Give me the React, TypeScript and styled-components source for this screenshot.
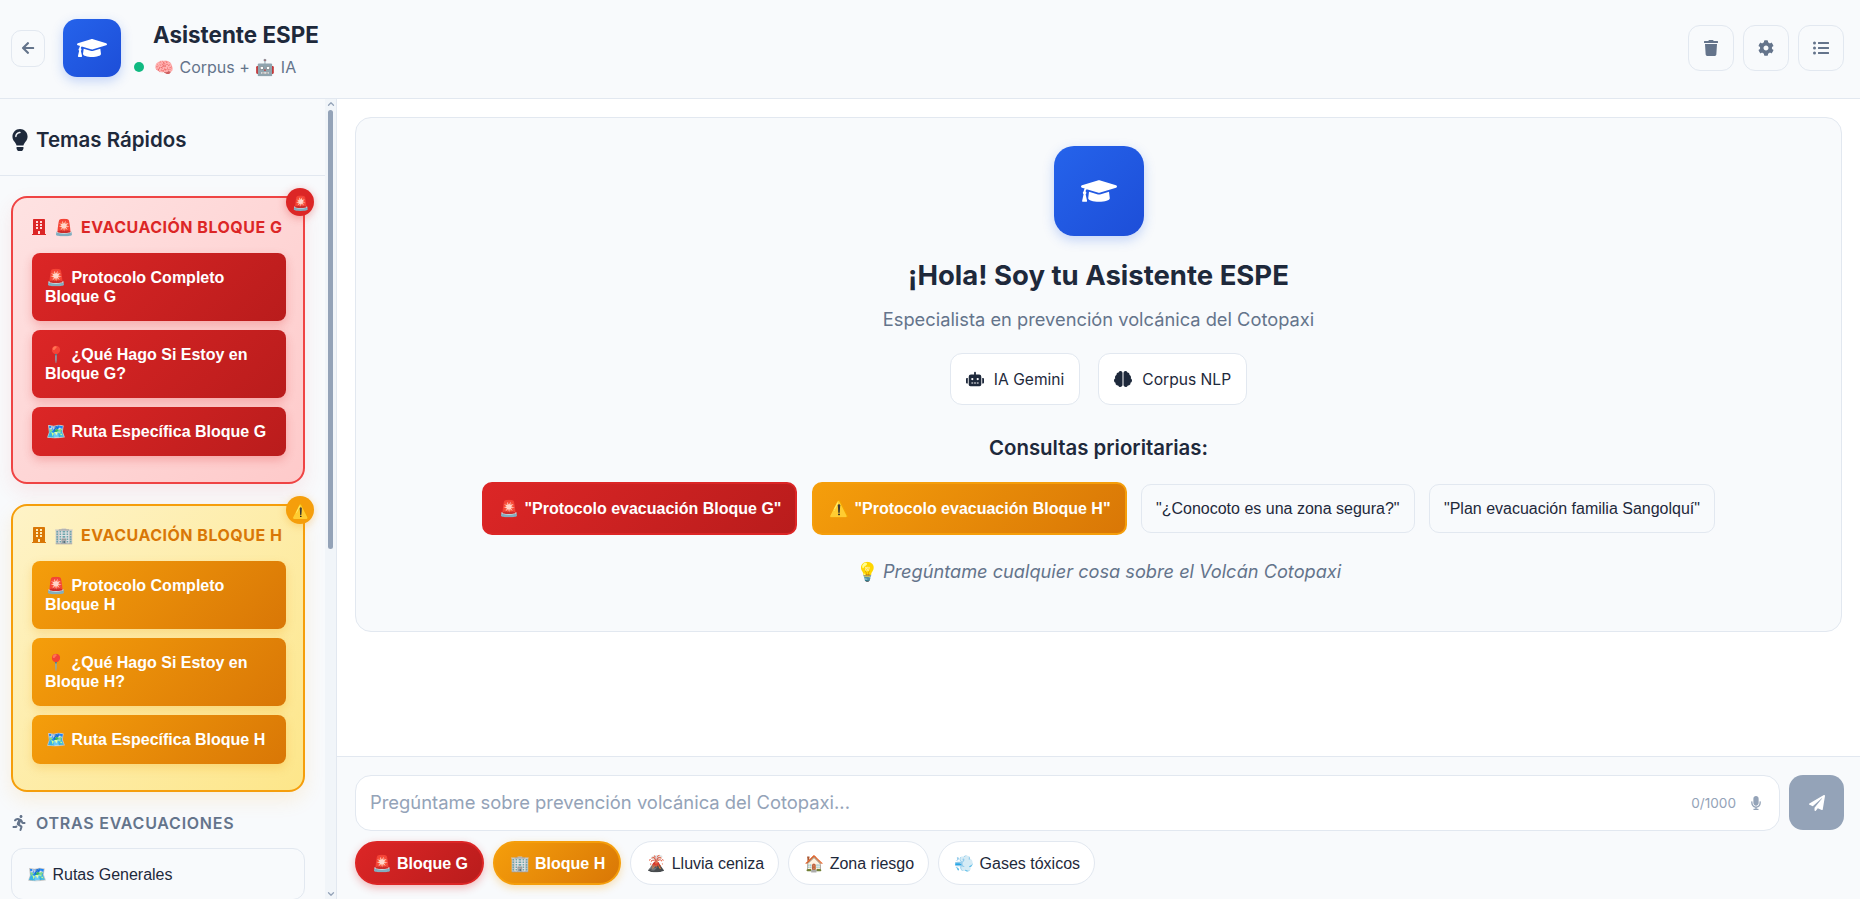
import React from "react";
import styled, { createGlobalStyle, css } from "styled-components";
import { ChevronDown, ChevronUp } from "lucide-react";
import {
  FaArrowLeft,
  FaBrain,
  FaBuilding,
  FaCog,
  FaGraduationCap,
  FaLightbulb,
  FaListUl,
  FaMicrophone,
  FaPaperPlane,
  FaRobot,
  FaRunning,
  FaTrash,
} from "react-icons/fa";

type Tone = "red" | "amber";

const GlobalStyle = createGlobalStyle`
  html, body { margin: 0; height: 100%; overflow: hidden; }
  body { font-family: Inter, "Noto Sans", sans-serif; color: #1e293b; background: #fff; }
  * { box-sizing: border-box; }
  button { font-family: "Liberation Sans", Arial, sans-serif; cursor: pointer; }
`;

const toneGradient = (tone: Tone) =>
  tone === "red"
    ? "linear-gradient(135deg, #dc2626, #b91c1c)"
    : "linear-gradient(135deg, #f59e0b, #d97706)";

const Glyph = styled.span`
  display: inline-block;
  width: 22px;
  text-align: center;
  font-weight: 400;
  font-style: normal;
`;

const Page = styled.div`
  height: 899px;
  display: flex;
  flex-direction: column;
`;

const Header = styled.header`
  height: 99px;
  flex: none;
  display: flex;
  align-items: center;
  justify-content: space-between;
  padding: 0 16px 2px 11px;
  background: #f8fafc;
  border-bottom: 1px solid #e2e8f0;
`;

const HeaderLeft = styled.div`
  display: flex;
  align-items: center;
`;

const BackButton = styled.button`
  width: 34px;
  height: 37px;
  border: 1px solid #e2e8f0;
  border-radius: 10px;
  background: transparent;
  color: #64748b;
  font-size: 14px;
  display: flex;
  align-items: center;
  justify-content: center;
  padding: 0;
`;

const LogoTile = styled.div<{ $size: number; $radius: number; $icon: number }>`
  width: ${(p) => p.$size}px;
  height: ${(p) => p.$size}px;
  border-radius: ${(p) => p.$radius}px;
  background: linear-gradient(135deg, #2563eb, #1d4ed8);
  box-shadow: 0 4px 12px rgba(37, 99, 235, 0.25);
  color: #fff;
  font-size: ${(p) => p.$icon}px;
  display: flex;
  align-items: center;
  justify-content: center;
  flex: none;
`;

const HeaderLogo = styled(LogoTile)`
  margin-left: 18px;
`;

const TitleBlock = styled.div`
  margin-left: 13px;
  display: flex;
  flex-direction: column;
  gap: 8px;
`;

const AppTitle = styled.h1`
  margin: 0 0 0 19px;
  font-size: 22.4px;
  line-height: 29px;
  font-weight: 700;
  color: #1e293b;
`;

const Status = styled.div`
  display: flex;
  align-items: center;
  font-size: 16px;
  line-height: 20px;
  color: #64748b;
  white-space: pre;
`;

const StatusDot = styled.span`
  width: 10px;
  height: 10px;
  border-radius: 50%;
  background: #10b981;
  margin-right: 9px;
`;

const HeaderActions = styled.div`
  display: flex;
  gap: 9px;
`;

const IconButton = styled.button`
  width: 46px;
  height: 46px;
  border: 1px solid #e2e8f0;
  border-radius: 12px;
  background: transparent;
  color: #64748b;
  font-size: 16px;
  display: flex;
  align-items: center;
  justify-content: center;
  padding: 0;
`;

const Body = styled.div`
  flex: 1;
  min-height: 0;
  display: flex;
`;

const Sidebar = styled.aside`
  width: 337px;
  flex: none;
  display: flex;
  background: #f8fafc;
`;

const SidebarScroll = styled.div`
  flex: 1;
  min-width: 0;
  overflow: hidden;
`;

const Rail = styled.div`
  width: 12px;
  flex: none;
  display: flex;
  flex-direction: column;
  align-items: center;
  background: #f1f5f9;
  border-right: 1px solid #e2e8f0;
  color: #94a3b8;
`;

const RailThumb = styled.div`
  width: 5px;
  height: 439px;
  margin-top: 1px;
  border-radius: 3px;
  background: #94a3b8;
`;

const RailSpacer = styled.div`
  flex: 1;
`;

const SidebarHead = styled.div`
  height: 77px;
  display: flex;
  align-items: center;
  gap: 5px;
  padding: 5px 9px 0;
  border-bottom: 1px solid #e2e8f0;
  font-size: 20.5px;
  font-weight: 600;
  color: #1e293b;
  svg { font-size: 22px; }
`;

const SidebarBody = styled.div`
  padding: 20px 20px 0 11px;
`;

const Block = styled.section<{ $tone: Tone }>`
  position: relative;
  height: 288px;
  margin-bottom: 20px;
  padding: 19px 18px 0;
  border-radius: 16px;
  ${(p) =>
    p.$tone === "red"
      ? css`
          border: 2px solid #ef4444;
          background: linear-gradient(135deg, #fee2e2, #fecaca);
          box-shadow: 0 8px 20px rgba(239, 68, 68, 0.1);
        `
      : css`
          border: 2px solid #f59e0b;
          background: linear-gradient(135deg, #fef3c7, #fde68a);
          box-shadow: 0 8px 20px rgba(245, 158, 11, 0.12);
        `}
`;

const BlockBadge = styled.span<{ $tone: Tone }>`
  position: absolute;
  top: -10px;
  right: -11px;
  width: 28px;
  height: 28px;
  border-radius: 50%;
  background: ${(p) => (p.$tone === "red" ? "#dc2626" : "#f59e0b")};
  box-shadow: 0 2px 8px ${(p) => (p.$tone === "red" ? "rgba(220,38,38,.35)" : "rgba(245,158,11,.35)")};
  font-size: 14px;
  display: flex;
  align-items: center;
  justify-content: center;
`;

const BlockTitle = styled.h3<{ $tone: Tone }>`
  margin: 0 0 16px;
  height: 20px;
  display: flex;
  align-items: center;
  gap: 6px;
  font-size: 16px;
  font-weight: 700;
  letter-spacing: 0.5px;
  white-space: nowrap;
  color: ${(p) => (p.$tone === "red" ? "#dc2626" : "#d97706")};
`;

const BlockButtons = styled.div`
  display: flex;
  flex-direction: column;
  gap: 9px;
  margin: 0 -1px 0 1px;
`;

const BlockButton = styled.button<{ $tone: Tone }>`
  border: 0;
  border-radius: 8px;
  padding: 15px 13px;
  text-align: left;
  font-size: 16px;
  line-height: 19px;
  font-weight: 700;
  color: #fff;
  background: ${(p) => toneGradient(p.$tone)};
  box-shadow: 0 4px 10px ${(p) => (p.$tone === "red" ? "rgba(220,38,38,.25)" : "rgba(245,158,11,.25)")};
`;

const SectionLabel = styled.h4`
  margin: 21px 0 15px;
  display: flex;
  align-items: center;
  gap: 9px;
  font-size: 16px;
  line-height: 20px;
  font-weight: 600;
  letter-spacing: 0.75px;
  color: #64748b;
`;

const TopicButton = styled.button`
  width: 100%;
  height: 52px;
  padding: 0 14px;
  text-align: left;
  font-size: 16px;
  color: #1e293b;
  background: #f8fafc;
  border: 1px solid #e2e8f0;
  border-radius: 12px;
`;

const Main = styled.main`
  flex: 1;
  min-width: 0;
  display: flex;
  flex-direction: column;
`;

const ChatArea = styled.div`
  flex: 1;
  min-height: 0;
  padding: 18px 18px 0 18px;
  background: #fff;
`;

const Welcome = styled.div`
  height: 515px;
  padding: 28px 0 0;
  display: flex;
  flex-direction: column;
  align-items: center;
  background: #f8fafc;
  border: 1px solid #e2e8f0;
  border-radius: 16px;
`;

const Greeting = styled.h2`
  margin: 22px 0 0;
  font-size: 27.5px;
  line-height: 34px;
  font-weight: 700;
  color: #1e293b;
`;

const Subtitle = styled.p`
  margin: 16px 0 0;
  font-size: 18.3px;
  line-height: 22px;
  color: #64748b;
`;

const ChipRow = styled.div`
  display: flex;
  gap: 18px;
  margin-top: 23px;
`;

const FeatureChip = styled.div`
  height: 52px;
  padding: 0 15px;
  display: flex;
  align-items: center;
  gap: 10px;
  background: #fff;
  border: 1px solid #e2e8f0;
  border-radius: 12px;
  font-size: 15.6px;
  color: #1e293b;
  svg { font-size: 18px; }
`;

const PromptHeading = styled.h3`
  margin: 31px 0 0;
  font-size: 20.4px;
  line-height: 24px;
  font-weight: 600;
  color: #1e293b;
`;

const PromptRow = styled.div`
  display: flex;
  align-items: center;
  gap: 14.5px;
  margin-top: 22px;
`;

const PromptButton = styled.button<{ $tone?: Tone }>`
  padding: 0 14px;
  border-radius: 10px;
  font-size: 16px;
  white-space: nowrap;
  ${(p) =>
    p.$tone
      ? css`
          height: 53px;
          color: #fff;
          font-weight: 700;
          background: ${toneGradient(p.$tone)};
          border: 2px solid ${p.$tone === "red" ? "#dc2626" : "#f59e0b"};
        `
      : css`
          height: 49px;
          color: #1e293b;
          background: #f8fafc;
          border: 1px solid #e2e8f0;
        `}
`;

const Hint = styled.p`
  margin: 24px 0 0;
  font-size: 18.2px;
  line-height: 24px;
  font-style: italic;
  color: #64748b;
`;

const Composer = styled.div`
  height: 143px;
  flex: none;
  padding: 18px 16px 0 18px;
  background: #f8fafc;
  border-top: 1px solid #e2e8f0;
`;

const InputRow = styled.div`
  display: flex;
  gap: 9px;
`;

const InputBox = styled.div`
  flex: 1;
  height: 56px;
  display: flex;
  align-items: center;
  padding: 0 16px 0 14px;
  background: #fff;
  border: 1px solid #e2e8f0;
  border-radius: 16px;
`;

const Prompt = styled.input`
  flex: 1;
  border: 0;
  outline: 0;
  padding: 0 0 2px;
  background: transparent;
  font-family: Inter, sans-serif;
  font-size: 18.4px;
  &::placeholder { color: #94a3b8; }
`;

const Counter = styled.span`
  font-size: 13.6px;
  color: #94a3b8;
  margin-right: 13px;
`;

const MicIcon = styled(FaMicrophone)`
  font-size: 14px;
  color: #94a3b8;
`;

const SendButton = styled.button`
  width: 55px;
  height: 55px;
  border: 0;
  border-radius: 14px;
  background: #94a3b8;
  color: #fff;
  font-size: 16px;
  display: flex;
  align-items: center;
  justify-content: center;
  padding: 0;
`;

const QuickRow = styled.div`
  display: flex;
  gap: 9.5px;
  margin-top: 10px;
`;

const QuickChip = styled.button<{ $tone?: Tone }>`
  height: 44px;
  border-radius: 22px;
  font-size: 16px;
  white-space: nowrap;
  ${(p) =>
    p.$tone
      ? css`
          padding: 0 13.5px;
          color: #fff;
          font-weight: 700;
          background: ${toneGradient(p.$tone)};
          border: 2px solid ${p.$tone === "red" ? "#dc2626" : "#f59e0b"};
          box-shadow: 0 3px 8px ${p.$tone === "red" ? "rgba(220,38,38,.3)" : "rgba(245,158,11,.3)"};
        `
      : css`
          padding: 0 13.5px 0 14px;
          color: #1e293b;
          background: #fff;
          border: 1px solid #e2e8f0;
        `}
`;

const blocks: { tone: Tone; badge: string; emoji: string; name: string; letter: string }[] = [
  { tone: "red", badge: "🚨", emoji: "🚨", name: "EVACUACIÓN BLOQUE G", letter: "G" },
  { tone: "amber", badge: "⚠️", emoji: "🏢", name: "EVACUACIÓN BLOQUE H", letter: "H" },
];

export default function App() {
  return (
    <Page>
      <GlobalStyle />
      <Header>
        <HeaderLeft>
          <BackButton aria-label="Volver">
            <FaArrowLeft />
          </BackButton>
          <HeaderLogo $size={58} $radius={14} $icon={30}>
            <FaGraduationCap />
          </HeaderLogo>
          <TitleBlock>
            <AppTitle>Asistente ESPE</AppTitle>
            <Status>
              <StatusDot /><Glyph>🧠</Glyph> Corpus + <Glyph>🤖</Glyph> IA
            </Status>
          </TitleBlock>
        </HeaderLeft>
        <HeaderActions>
          <IconButton aria-label="Limpiar"><FaTrash /></IconButton>
          <IconButton aria-label="Ajustes"><FaCog /></IconButton>
          <IconButton aria-label="Temas"><FaListUl /></IconButton>
        </HeaderActions>
      </Header>
      <Body>
        <Sidebar>
          <SidebarScroll>
            <SidebarHead>
              <FaLightbulb />
              Temas Rápidos
            </SidebarHead>
            <SidebarBody>
              {blocks.map((b) => (
                <Block key={b.letter} $tone={b.tone}>
                  <BlockBadge $tone={b.tone}>{b.badge}</BlockBadge>
                  <BlockTitle $tone={b.tone}>
                    <FaBuilding />
                    <Glyph>{b.emoji}</Glyph>
                    {b.name}
                  </BlockTitle>
                  <BlockButtons>
                    <BlockButton $tone={b.tone}><Glyph>🚨</Glyph> Protocolo Completo<br />Bloque {b.letter}</BlockButton>
                    <BlockButton $tone={b.tone}><Glyph>📍</Glyph> ¿Qué Hago Si Estoy en<br />Bloque {b.letter}?</BlockButton>
                    <BlockButton $tone={b.tone}><Glyph>🗺️</Glyph> Ruta Específica Bloque {b.letter}</BlockButton>
                  </BlockButtons>
                </Block>
              ))}
              <SectionLabel>
                <FaRunning />
                OTRAS EVACUACIONES
              </SectionLabel>
              <TopicButton><Glyph>🗺️</Glyph> Rutas Generales</TopicButton>
            </SidebarBody>
          </SidebarScroll>
          <Rail>
            <ChevronUp size={10} strokeWidth={3} />
            <RailThumb />
            <RailSpacer />
            <ChevronDown size={10} strokeWidth={3} />
          </Rail>
        </Sidebar>
        <Main>
          <ChatArea>
            <Welcome>
              <LogoTile $size={90} $radius={20} $icon={36}>
                <FaGraduationCap />
              </LogoTile>
              <Greeting>¡Hola! Soy tu Asistente ESPE</Greeting>
              <Subtitle>Especialista en prevención volcánica del Cotopaxi</Subtitle>
              <ChipRow>
                <FeatureChip><FaRobot />IA Gemini</FeatureChip>
                <FeatureChip><FaBrain />Corpus NLP</FeatureChip>
              </ChipRow>
              <PromptHeading>Consultas prioritarias:</PromptHeading>
              <PromptRow>
                <PromptButton $tone="red"><Glyph>🚨</Glyph> "Protocolo evacuación Bloque G"</PromptButton>
                <PromptButton $tone="amber"><Glyph>⚠️</Glyph> "Protocolo evacuación Bloque H"</PromptButton>
                <PromptButton>"¿Conocoto es una zona segura?"</PromptButton>
                <PromptButton>"Plan evacuación familia Sangolquí"</PromptButton>
              </PromptRow>
              <Hint><Glyph>💡</Glyph> Pregúntame cualquier cosa sobre el Volcán Cotopaxi</Hint>
            </Welcome>
          </ChatArea>
          <Composer>
            <InputRow>
              <InputBox>
                <Prompt placeholder="Pregúntame sobre prevención volcánica del Cotopaxi..." />
                <Counter>0/1000</Counter>
                <MicIcon />
              </InputBox>
              <SendButton aria-label="Enviar"><FaPaperPlane /></SendButton>
            </InputRow>
            <QuickRow>
              <QuickChip $tone="red"><Glyph>🚨</Glyph> Bloque G</QuickChip>
              <QuickChip $tone="amber"><Glyph>🏢</Glyph> Bloque H</QuickChip>
              <QuickChip><Glyph>🌋</Glyph> Lluvia ceniza</QuickChip>
              <QuickChip><Glyph>🏠</Glyph> Zona riesgo</QuickChip>
              <QuickChip><Glyph>💨</Glyph> Gases tóxicos</QuickChip>
            </QuickRow>
          </Composer>
        </Main>
      </Body>
    </Page>
  );
}
